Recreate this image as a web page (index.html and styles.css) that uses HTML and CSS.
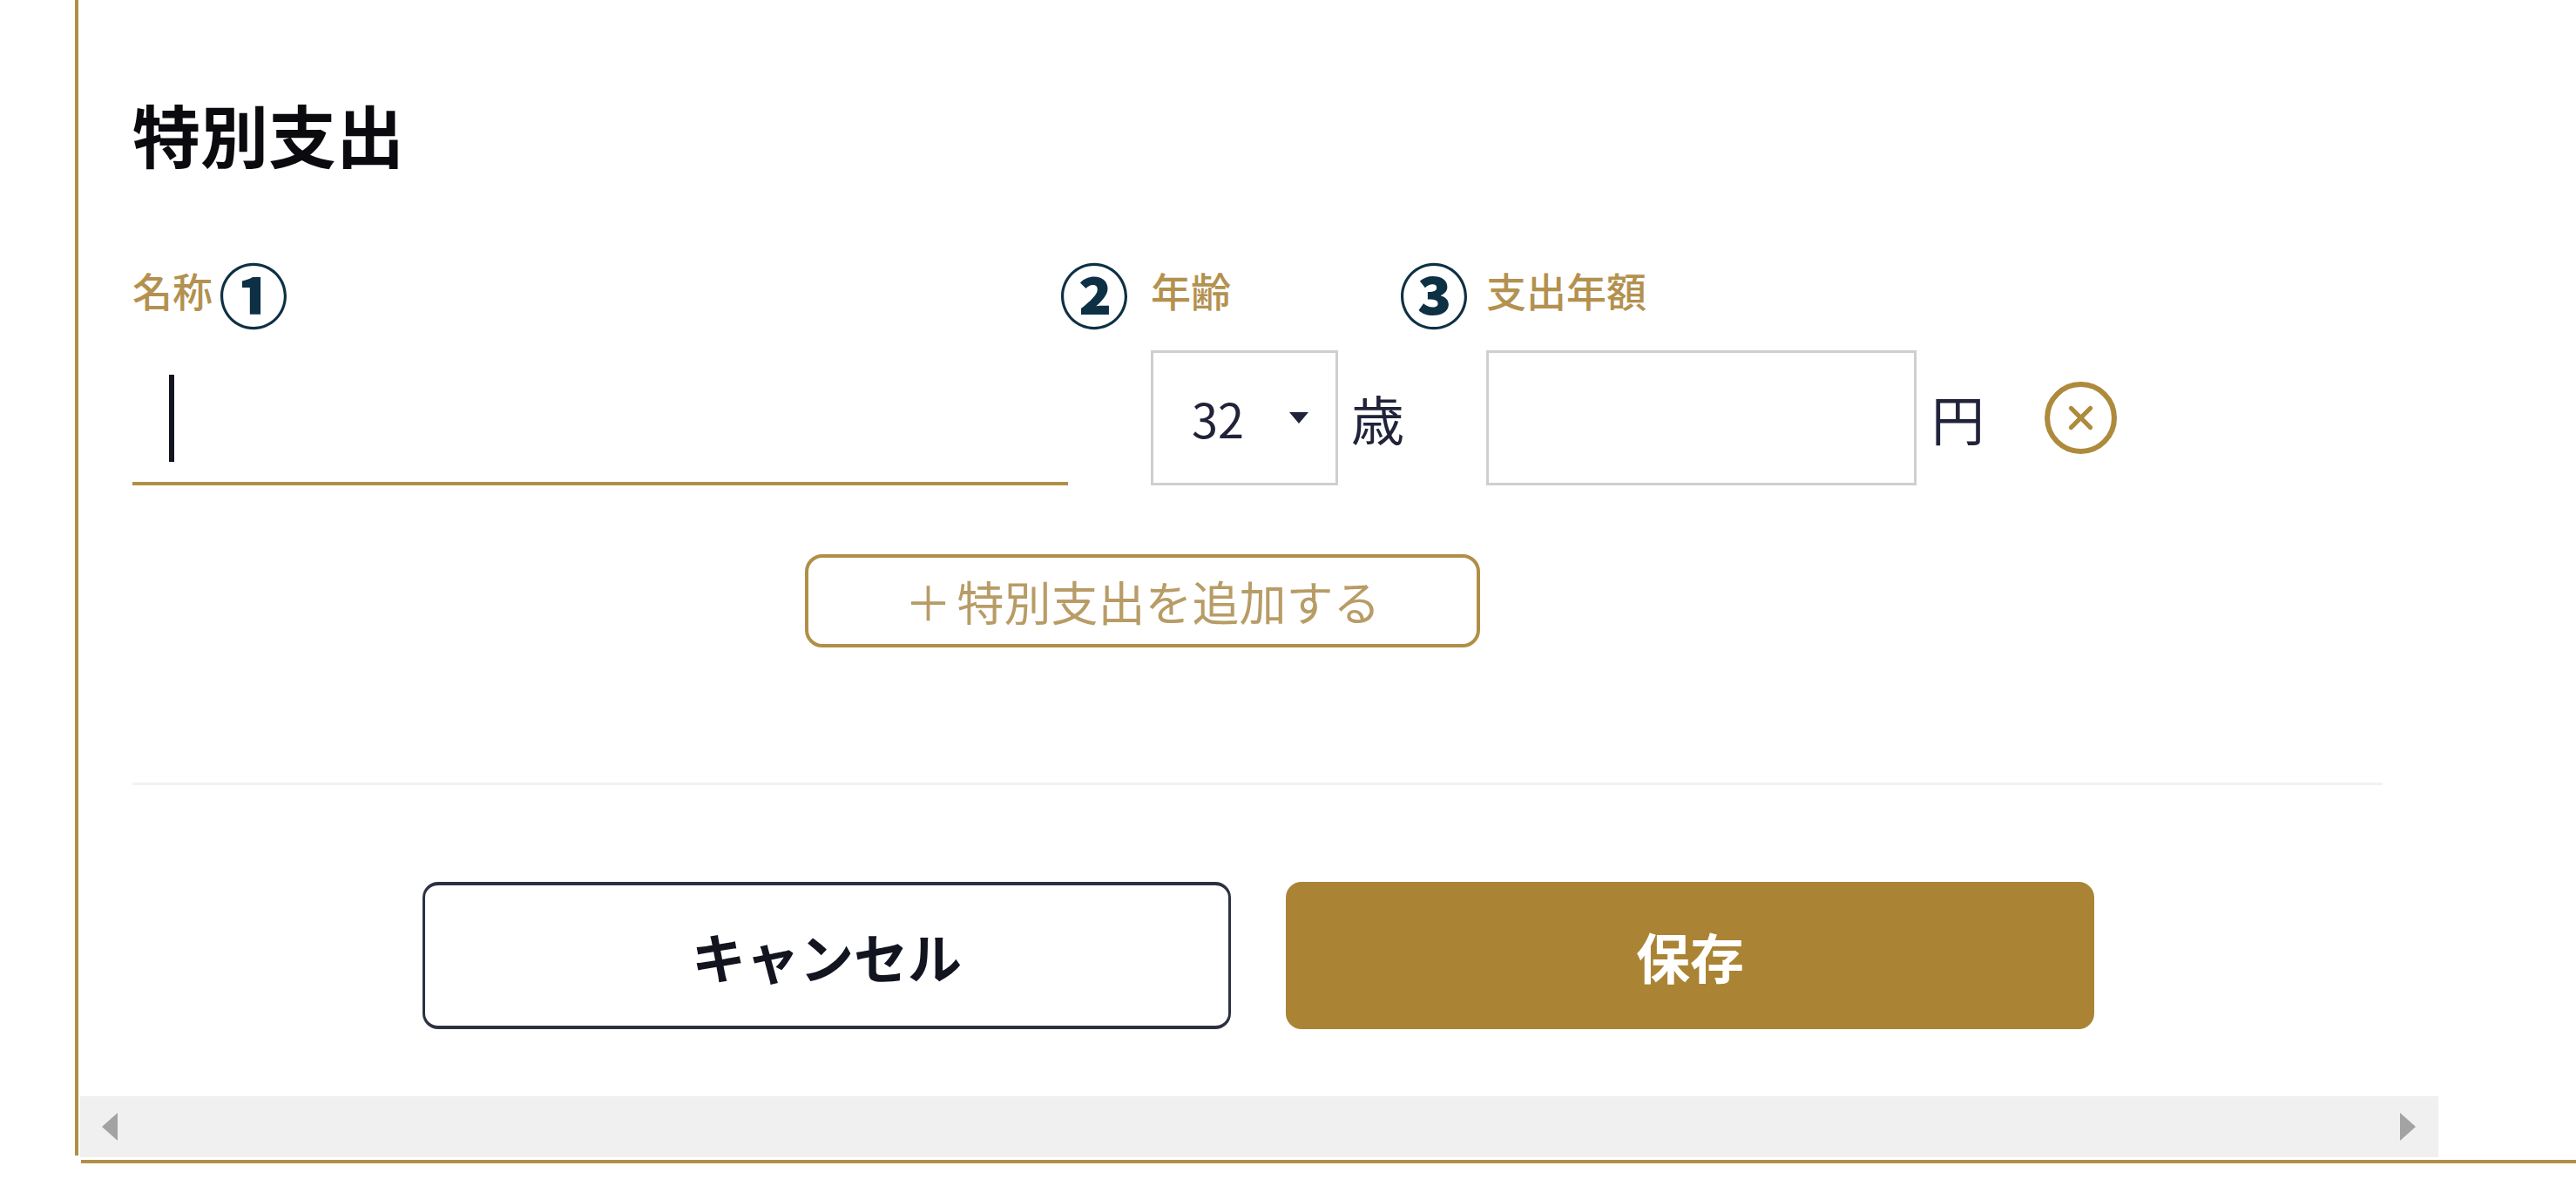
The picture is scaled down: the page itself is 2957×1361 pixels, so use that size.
FILE: index.html
```html
<!DOCTYPE html>
<html lang="ja">
<head>
    <meta charset="UTF-8">
    <title>特別支出</title>
    <link rel="stylesheet" href="styles.css">
</head>
<body>
    <div class="frame">
        <div class="rule"></div>
        <div class="panel">
            <div class="content">
                <h2 class="title">特別支出</h2>

                <div class="fields">
                    <div class="field field-name">
                        <label class="label">名称</label>
                        <div class="name-input"><span class="caret"></span></div>
                    </div>
                    <div class="field field-age">
                        <label class="label">年齢</label>
                        <div class="control">
                            <div class="select">
                                <span>32</span>
                                <span class="select-arrow"></span>
                            </div>
                            <span class="unit unit-age">歳</span>
                        </div>
                    </div>
                    <div class="field field-amount">
                        <label class="label">支出年額</label>
                        <div class="control">
                            <div class="amount-input"></div>
                            <span class="unit unit-yen">円</span>
                            <svg class="remove" viewBox="0 0 82 82">
                                <circle cx="41" cy="41" r="38" fill="none" stroke="#ae8a3c" stroke-width="6"/>
                                <path d="M30 30 L52 52 M52 30 L30 52" fill="none" stroke="#ae8a3c" stroke-width="5" stroke-linecap="round"/>
                            </svg>
                        </div>
                    </div>

                    <!-- 注釈の丸数字 -->
                    <span class="mark mark-1">①</span>
                    <span class="mark mark-2">②</span>
                    <span class="mark mark-3">③</span>
                </div>

                <div class="add-row">
                    <button class="add-button"><span class="plus">＋</span>特別支出を追加する</button>
                </div>

                <div class="divider"></div>

                <div class="actions">
                    <button class="btn btn-cancel">キャンセル</button>
                    <button class="btn btn-save">保存</button>
                </div>
            </div>

            <div class="scrollbar">
                <span class="arrow arrow-left"></span>
                <span class="arrow arrow-right"></span>
            </div>
        </div>
    </div>
    <div class="bottom-line"></div>
</body>
</html>
```

FILE: styles.css
```css
body {
  margin: 0;
  background-color: #fff;
  font-family: "Noto Sans CJK JP", "Noto Sans", sans-serif;
  overflow: hidden;
}

.frame {
  display: flex;
  margin-left: 86px;
  height: 1328px;
}

.rule {
  width: 4px;
  height: 1326px;
  background-color: #b08f46;
}

.panel {
  display: flex;
  flex-direction: column;
  width: 2707px;
  margin-left: 2px;
}

.content {
  flex: 1;
  padding-left: 60px;
}

.title {
  margin: 110px 0 0;
  font-size: 78px;
  line-height: 86px;
  font-weight: 700;
  color: #0b0b0f;
}

/* form row */
.fields {
  position: relative;
  display: flex;
  margin-top: 106px;
}

.field-name {
  width: 1074px;
  margin-right: 95px;
}

.field-age {
  width: 385px;
}

.label {
  display: block;
  height: 100px;
  font-size: 46px;
  line-height: 60px;
  font-weight: 500;
  color: #b3914f;
}

.name-input {
  box-sizing: border-box;
  height: 155px;
  padding: 28px 0 0 42px;
  border-bottom: 4px solid #b08f46;
}

.caret {
  display: block;
  width: 6px;
  height: 100px;
  background-color: #12141f;
}

.control {
  display: flex;
  align-items: center;
}

.select {
  display: flex;
  align-items: center;
  box-sizing: border-box;
  width: 215px;
  height: 155px;
  padding-left: 44px;
  border: 3px solid #cfcfcf;
  font-size: 54px;
  font-weight: 400;
  color: #20233a;
}

.select-arrow {
  width: 0;
  height: 0;
  margin-left: 52px;
  border-left: 11px solid transparent;
  border-right: 11px solid transparent;
  border-top: 13px solid #20233a;
}

.unit {
  font-size: 61px;
  font-weight: 400;
  color: #20233a;
}

.unit-age {
  margin-left: 15px;
}

.amount-input {
  box-sizing: border-box;
  width: 494px;
  height: 155px;
  border: 3px solid #cfcfcf;
}

.unit-yen {
  margin-left: 17px;
}

.remove {
  width: 83px;
  height: 83px;
  margin-left: 69px;
}

.mark {
  position: absolute;
  top: -13px;
  font-size: 80px;
  line-height: 92px;
  font-weight: 900;
  color: #0e3045;
}

.mark-1 { left: 99px; }
.mark-2 { left: 1064px; }
.mark-3 { left: 1454px; }

/* add button */
.add-row {
  margin-top: 79px;
  padding-left: 772px;
}

.add-button {
  box-sizing: border-box;
  width: 775px;
  height: 107px;
  border: 4px solid #b08f46;
  border-radius: 20px;
  background-color: #fff;
  font-family: inherit;
  font-size: 54px;
  line-height: 88px;
  font-weight: 400;
  color: #b89c66;
}

.plus {
  margin-right: 6px;
}

.divider {
  width: 2583px;
  height: 3px;
  margin-top: 155px;
  background-color: #f0f2f5;
}

.actions {
  display: flex;
  gap: 63px;
  margin-top: 111px;
  padding-left: 333px;
}

.btn {
  box-sizing: border-box;
  width: 928px;
  height: 169px;
  border-radius: 18px;
  font-family: inherit;
  font-size: 62px;
  font-weight: 700;
}

.btn-cancel {
  border: solid #2d3142;
  border-width: 4px 3px;
  background-color: #fff;
  color: #12141f;
}

.btn-save {
  border: none;
  background-color: #aa8434;
  color: #fff;
}

.scrollbar {
  display: flex;
  align-items: center;
  justify-content: space-between;
  height: 70px;
  padding: 0 26px 0 25px;
  background-color: #f0f0f0;
}

.arrow {
  width: 0;
  height: 0;
  border-top: 16px solid transparent;
  border-bottom: 16px solid transparent;
}

.arrow-left {
  border-right: 18px solid #a3a3a3;
}

.arrow-right {
  border-left: 18px solid #a3a3a3;
}

.bottom-line {
  height: 4px;
  margin: 3px 0 0 93px;
  background-color: #b08f46;
}
```
